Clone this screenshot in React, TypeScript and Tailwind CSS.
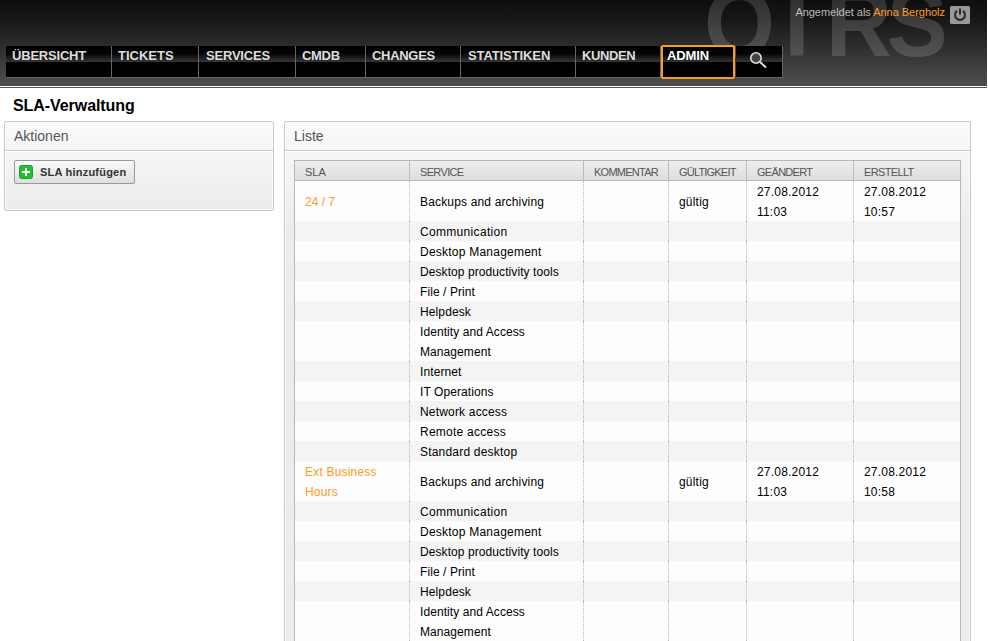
import React from "react";

const nav = [
  { label: "ÜBERSICHT", style: "w-[106px] pl-[6px] tracking-[-0.2px]" },
  { label: "TICKETS", style: "w-[87px] pl-[6px] tracking-[0px]" },
  { label: "SERVICES", style: "w-[97px] pl-[7px] tracking-[-0.2px]" },
  { label: "CMDB", style: "w-[70px] pl-[6px] tracking-[-0.3px]" },
  { label: "CHANGES", style: "w-[95px] pl-[6px] tracking-[-0.3px]" },
  { label: "STATISTIKEN", style: "w-[115px] pl-[7px] tracking-[-0.1px]" },
  { label: "KUNDEN", style: "w-[85px] pl-[6px] tracking-[-0.4px]" },
];

const services = [
  { name: "Communication", track: "tracking-[0.32px]" },
  { name: "Desktop Management", track: "tracking-[0.23px]" },
  { name: "Desktop productivity tools", track: "tracking-[0.08px]" },
  { name: "File / Print", track: "tracking-[0.08px]" },
  { name: "Helpdesk", track: "tracking-[0.12px]" },
  { name: "Identity and Access Management", track: "tracking-[0.08px]" },
  { name: "Internet", track: "tracking-[0.1px]" },
  { name: "IT Operations", track: "tracking-[0.08px]" },
  { name: "Network access", track: "tracking-[0.18px]" },
  { name: "Remote access", track: "tracking-[0.25px]" },
  { name: "Standard desktop", track: "tracking-[0.2px]" },
];

const slas = [
  { name: "24 / 7", track: "tracking-[0px]", time: "10:57" },
  { name: "Ext Business Hours", track: "tracking-[0.2px]", time: "10:58" },
];

type Cell = { text: string; track: string };
const empty: Cell = { text: "", track: "" };

const rows: Cell[][] = slas.flatMap((s) => [
  [
    { text: s.name, track: s.track },
    { text: "Backups and archiving", track: "tracking-[0.16px]" },
    empty,
    { text: "gültig", track: "tracking-[0.2px]" },
    { text: "27.08.2012 11:03", track: "tracking-[0.2px]" },
    { text: "27.08.2012 " + s.time, track: "tracking-[0.2px]" },
  ],
  ...services.map((n) => [empty, { text: n.name, track: n.track }, empty, empty, empty, empty]),
]);

const heads = [
  { text: "SLA", track: "tracking-[0px]" },
  { text: "SERVICE", track: "tracking-[-0.65px]" },
  { text: "KOMMENTAR", track: "tracking-[-0.75px]" },
  { text: "GÜLTIGKEIT", track: "tracking-[-0.8px]" },
  { text: "GEÄNDERT", track: "tracking-[-0.7px]" },
  { text: "ERSTELLT", track: "tracking-[-0.65px]" },
];
const grid = "grid grid-cols-[115px_174px_85px_78px_107px_106px]";
const fill = "bg-[linear-gradient(#000,#050505_25%,#343434_50%,#000_50%)]";
const panel = "rounded-[2px] border border-[#c8c8c8] shadow-[inset_0_0_0_1px_#fcfcfc]";
const panelTitle =
  "h-[29px] border-b border-[#c8c8c8] pl-[9px] text-[14px] leading-[28px] text-[#555] shadow-[0_1px_0_#fff]";

function Header() {
  return (
    <header className="relative h-[88px] w-[987px] overflow-hidden border-b border-[#555] bg-white">
      <div className="h-[86px] bg-[linear-gradient(#0f0f0f,#151515_20%,#4b4b4b_95%)]">
        <svg className="absolute left-0 top-0" width="987" height="86">
          <defs>
            <linearGradient id="logo" gradientUnits="userSpaceOnUse" x1="0" y1="0" x2="0" y2="57">
              <stop offset="0" stopColor="#303030" />
              <stop offset="1" stopColor="#545454" />
            </linearGradient>
          </defs>
          <text transform="scale(.95 1)" x="741 809.5 869.5 933.5" y="56" fontSize="96" fontWeight="bold" fontFamily="Liberation Sans, sans-serif" fill="url(#logo)">OTRS</text>
        </svg>
        <div className="relative flex h-[46px] justify-end gap-[5px] pr-[17px] pt-1 text-[11px] leading-4 text-[#bbb]">
          <span className="tracking-[-0.03px]">Angemeldet als <span className="text-[#ff9b20]">Anna Bergholz</span></span>
          <svg className="mt-0.5" width="20" height="18" viewBox="0 0 20 18">
            <rect width="20" height="18" rx="1.5" fill="#999" />
            <path d="M7 4.9a5 5 0 1 0 6 0M10 2.5v6" fill="none" stroke="#2a2a2a" strokeWidth="2" />
          </svg>
        </div>
        <nav className="relative flex pl-[6px] text-[13px] font-bold leading-[19px] text-[#ddd]">
          {nav.map((n) => (
            <div key={n.label} className={`${n.style} ${fill} h-[32px] border-b border-r border-[#666]`}>{n.label}</div>
          ))}
          <div className={`${fill} -mt-px h-[34px] w-[74px] rounded-[2px] border-2 border-[#ff9b20] pl-1 leading-[17px] tracking-[-0.1px] text-white`}>ADMIN</div>
          <div className={`${fill} ml-px h-[32px] w-[47px] border-b border-r border-[#666]`}>
            <svg className="ml-[13px] mt-[5px]" width="20" height="20" fill="none" stroke="#ddd">
              <circle cx="7" cy="7" r="5.2" fill="#444" strokeWidth="1.6" />
              <path d="M11 11l6 5.5" strokeWidth="2" />
            </svg>
          </div>
        </nav>
      </div>
    </header>
  );
}

export default function App() {
  return (
    <div className="h-[641px] w-[988px] overflow-hidden bg-white font-['Liberation_Sans',Arial,sans-serif] text-black">
      <Header />
      <h1 className="h-[33px] pl-[13px] pt-[6px] text-[16px] font-bold leading-6 tracking-[-0.07px]">SLA-Verwaltung</h1>
      <main className="flex items-start gap-[10px] pl-1">
        <section className={`${panel} h-[90px] w-[270px] bg-gradient-to-b from-[#fafafa] to-[#ececec]`}>
          <h2 className={panelTitle}>Aktionen</h2>
          <button className="ml-[9px] mt-[9px] flex h-6 w-[121px] items-center gap-[7px] whitespace-nowrap rounded-[2px] border border-[#999] bg-gradient-to-b from-[#fafafa] to-[#dedede] pl-1 text-[11px] font-bold tracking-[0.22px] text-[#333]">
            <svg width="14" height="14"><rect x=".5" y=".5" width="13" height="13" rx="2" fill="#20c030" stroke="#219c30" /><path d="M3 7h8M7 3v8" stroke="#fff" strokeWidth="2" /></svg>
            SLA hinzufügen
          </button>
        </section>
        <section className={`${panel} h-[700px] w-[687px] bg-gradient-to-b from-[#fafafa] via-[#ececec] via-15% to-[#ececec]`}>
          <h2 className={panelTitle}>Liste</h2>
          <div className="ml-[9px] mt-[9px] w-[667px] border border-[#b8b8b8] text-[12px]">
            <div className={`${grid} h-5 border-b border-[#b8b8b8] bg-gradient-to-b from-[#eee] to-[#ddd] text-[11px] leading-[22px] text-[#555]`}>
              {heads.map((h) => <div key={h.text} className={`${h.track} border-r border-[#bbb] pl-[10px] last:border-r-0`}>{h.text}</div>)}
            </div>
            {rows.map((r, i) => (
              <div key={i} className={`${grid} ${i % 2 ? "bg-[#f4f4f4]" : "bg-[#fdfdfd]"} min-h-5 leading-5`}>
                {r.map((c, j) => (
                  <div key={j} className={`flex items-center border-r border-dotted border-[#bbb] px-[10px] last:border-r-0 ${j === 0 ? "text-[#ff9b20]" : ""}`}>
                    <span className={`${c.track} -mb-px mt-px`}>{c.text}</span>
                  </div>
                ))}
              </div>
            ))}
          </div>
        </section>
      </main>
    </div>
  );
}
